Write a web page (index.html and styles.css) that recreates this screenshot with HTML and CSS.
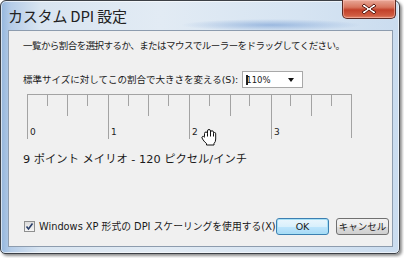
FILE: index.html
```html
<!DOCTYPE html>
<html lang="ja">
<head>
<meta charset="utf-8">
<link rel="stylesheet" href="styles.css">
</head>
<body>
<div class="window">
  <div class="titlebar">
    <div class="title">カスタム DPI 設定</div>
    <div class="blur"></div>
    <div class="close">
      <svg width="16" height="12" viewBox="0 0 16 12">
        <path d="M3 1 L8 5 L13 1 L15 3 L10 6 L15 9 L13 11 L8 7 L3 11 L1 9 L6 6 L1 3 Z" fill="#fff" stroke="#5a1a12" stroke-width="1" stroke-linejoin="round"/>
      </svg>
    </div>
  </div>
  <div class="client">
    <p class="line1">一覧から割合を選択するか、またはマウスでルーラーをドラッグしてください。</p>
    <div class="row2">
      <span class="label2">標準サイズに対してこの割合で大きさを変える(S):</span>
      <div class="combo"><span class="caret"></span><span class="val">110%</span><span class="arrow"></span></div>
    </div>
    <div class="ruler">
      <svg width="328" height="46" viewBox="0 0 328 46">
        <g stroke="#a3a3a3" stroke-width="1" fill="none">
          <path d="M1 0.5 H325"/>
          <path d="M1.5 0 V45"/>
          <path d="M21.5 0 V12 M41.5 0 V22 M61.5 0 V12 M82.5 0 V45"/>
          <path d="M102.5 0 V12 M122.5 0 V22 M142.5 0 V12 M163.5 0 V45"/>
          <path d="M183.5 0 V12 M204.5 0 V22 M223.5 0 V12 M245.5 0 V45"/>
          <path d="M264.5 0 V12 M285.5 0 V22 M305.5 0 V12 M325.5 0 V44"/>
        </g>
        <g class="rl">
          <text x="4" y="41">0</text>
          <text x="85" y="41">1</text>
          <text x="166" y="41">2</text>
          <text x="248" y="41">3</text>
        </g>
      </svg>
      <svg class="hand" width="16" height="18" viewBox="0 0 16 18">
        <path d="M3.5 8.5 V5.5 Q3.5 4 5 4 Q6.5 4 6.5 5.5 V3 Q6.5 1.5 8 1.5 Q9.5 1.5 9.5 3 V4 Q9.5 2.8 11 2.8 Q12.5 2.8 12.5 4.2 V5.5 Q12.5 4.5 13.6 4.5 Q14.7 4.5 14.7 5.8 V11 Q14.7 14 13 15.5 V17 H5.5 V15.5 Q3.5 14 2.2 12 L1 10 Q0.6 8.8 1.7 8.4 Q2.7 8.1 3.5 9.2 Z" fill="#fff" stroke="#111" stroke-width="1" stroke-linejoin="round"/>
        <path d="M6.5 5.5 V8.5 M9.5 4 V8.5 M12.5 5.5 V8.5" stroke="#111" stroke-width="1" fill="none"/>
      </svg>
    </div>
    <p class="line3">9 ポイント メイリオ - 120 ピクセル/インチ</p>
    <div class="bottom">
      <label class="check">
        <span class="box">
          <svg width="9" height="9" viewBox="0 0 9 9"><path d="M1.5 4.5 L3.5 7 L7.5 1.5" stroke="#2a3f6a" stroke-width="1.6" fill="none"/></svg>
        </span>
        <span class="checklabel">Windows XP 形式の DPI スケーリングを使用する(X)</span>
      </label>
      <div class="buttons">
        <button class="btn ok">OK</button>
        <button class="btn">キャンセル</button>
      </div>
    </div>
  </div>
</div>
</body>
</html>
```
FILE: styles.css
```css
* { box-sizing: border-box; }
html, body { margin: 0; padding: 0; }
body {
  width: 404px;
  height: 258px;
  background: #fff;
  font-family: "DejaVu Sans", "Noto Sans CJK JP", sans-serif;
  color: #1a1a1a;
  overflow: hidden;
}
.window {
  position: relative;
  width: 400px;
  height: 254px;
  border: 1px solid #3c4046;
  border-radius: 6px 6px 5px 5px;
  background:
    radial-gradient(ellipse 90px 6px at 270px 24px, rgba(80,130,200,0.45), rgba(80,130,200,0) 100%),
    linear-gradient(to right, #94b6dd 0px, #b6cde8 10px, #d9e5f1 40px, #e2ebf4 160px, #d6e4f2 300px, #cadcef 400px);
  box-shadow: 2px 2px 3px rgba(0,0,0,0.45), inset 0 0 0 1px rgba(255,255,255,0.6);
  padding: 0 6px 6px 7px;
  display: flex;
  flex-direction: column;
}
.titlebar {
  height: 29px;
  display: flex;
  align-items: flex-start;
  justify-content: space-between;
  position: relative;
}
.title {
  font-family: "Noto Sans CJK JP", sans-serif;
  font-size: 15px;
  line-height: 20px;
  margin-top: 5px;
  color: #222;
  letter-spacing: -0.2px;
}
.blur {
  flex: 1;
}
.close {
  width: 54px;
  height: 19px;
  margin-top: -1px;
  margin-right: -3px;
  border: 1px solid #5b2a24;
  border-top: none;
  border-radius: 0 0 5px 5px;
  background: linear-gradient(to bottom, #e8a898 0%, #d8765f 40%, #c2412a 55%, #cf5a40 85%, #e0866a 100%);
  box-shadow: inset 0 0 0 1px rgba(255,200,190,0.5);
  display: flex;
  align-items: center;
  justify-content: center;
}
.client {
  flex: 1;
  background: #f0f0f0;
  border: 1px solid #8d9cae;
  display: flex;
  flex-direction: column;
  padding: 8px 3px 11px 14px;
  font-size: 9.5px;
}
p { margin: 0; }
.line1 {
  line-height: 14px;
  white-space: nowrap;
  letter-spacing: -0.55px;
}
.row2 {
  display: flex;
  align-items: center;
  margin-top: 18px;
  height: 17px;
}
.label2 { line-height: 14px; white-space: nowrap; }
.combo {
  margin-left: 4px;
  width: 61px;
  height: 17px;
  background: #fff;
  border: 1px solid #a8a8a8;
  display: flex;
  align-items: center;
  padding-left: 3px;
  position: relative;
}
.caret {
  width: 2px;
  height: 10px;
  background: #222;
  margin-right: -2px;
}
.val { font-size: 8.5px; line-height: 14px; }
.arrow {
  margin-left: auto;
  margin-right: 8px;
  width: 0; height: 0;
  border-left: 3.5px solid transparent;
  border-right: 3.5px solid transparent;
  border-top: 4px solid #111;
}
.ruler {
  margin-top: 6px;
  margin-left: 3px;
  height: 46px;
  position: relative;
}
.ruler svg { display: block; }
.rl text {
  font-family: "DejaVu Sans", sans-serif;
  font-size: 9px;
  fill: #222;
}
.hand {
  position: absolute;
  left: 175px;
  top: 34px;
}
.line3 {
  margin-top: 12px;
  font-size: 11.3px;
  line-height: 16px;
  white-space: nowrap;
}
.bottom {
  margin-top: auto;
  display: flex;
  align-items: center;
  justify-content: space-between;
}
.check {
  display: flex;
  align-items: center;
  gap: 4px;
  margin-left: 1px;
  white-space: nowrap;
  line-height: 14px;
}
.checklabel { font-size: 9.8px; }
.box {
  width: 11px;
  height: 11px;
  border: 1px solid #8e8f8f;
  background: linear-gradient(to bottom, #dcdcdc, #f6f6f6);
  display: flex;
  align-items: center;
  justify-content: center;
}
.box svg { display: block; }
.buttons { display: flex; gap: 6px; }
.btn {
  font-family: "DejaVu Sans", "Noto Sans CJK JP", sans-serif;
  font-size: 9.5px;
  color: #1a1a1a;
  height: 17px;
  width: 53px;
  padding: 0;
  border: 1px solid #707070;
  border-radius: 3px;
  background: linear-gradient(to bottom, #f2f2f2 0%, #ebebeb 50%, #dddddd 51%, #cfcfcf 100%);
  line-height: 14px;
}
.btn.ok {
  margin-right: 1px;
  border-color: #3c7fb1;
  box-shadow: inset 0 0 0 1px #a6e0f6;
  background: linear-gradient(to bottom, #eaf6fd 0%, #d9f0fc 50%, #bee6fd 51%, #a7d9f5 100%);
}
```
